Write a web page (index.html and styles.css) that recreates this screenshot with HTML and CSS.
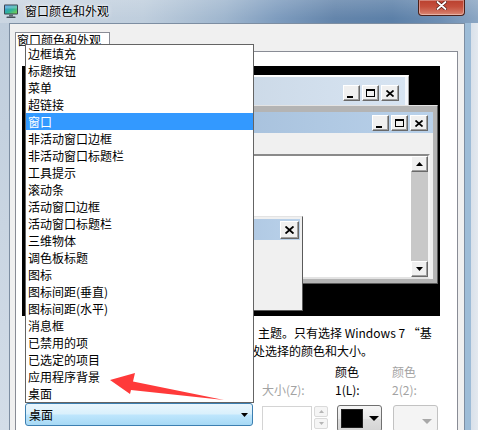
FILE: index.html
```html
<!DOCTYPE html>
<html lang="zh-CN">
<head>
<meta charset="utf-8">
<title>窗口颜色和外观</title>
<link rel="stylesheet" href="styles.css">
</head>
<body>
<div class="win">
  <div class="titlebar">
    <svg class="app-icon" width="16" height="16" viewBox="0 0 16 16">
      <defs>
        <linearGradient id="scr" x1="0" y1="0" x2="1" y2="1">
          <stop offset="0" stop-color="#3a8ee6"/>
          <stop offset="0.55" stop-color="#2fb39a"/>
          <stop offset="1" stop-color="#7ed04b"/>
        </linearGradient>
      </defs>
      <rect x="1" y="1.5" width="14" height="10" rx="1" fill="#39434e"/>
      <rect x="2" y="2.5" width="12" height="8" fill="url(#scr)"/>
      <rect x="2" y="2.5" width="12" height="3" fill="#fff" opacity="0.25"/>
      <rect x="6" y="11.5" width="4" height="2" fill="#5d6873"/>
      <rect x="3.5" y="13.5" width="9" height="1.5" rx="0.5" fill="#46505b"/>
    </svg>
    <span class="title">窗口颜色和外观</span>
    <div class="close">
      <svg width="11" height="9" viewBox="0 0 11 9">
        <path d="M1.5 1 L9.5 8 M9.5 1 L1.5 8" stroke="#5b1f16" stroke-width="3.4" stroke-linecap="round"/>
        <path d="M1.5 1 L9.5 8 M9.5 1 L1.5 8" stroke="#fff" stroke-width="1.8" stroke-linecap="round"/>
      </svg>
    </div>
  </div>

  <div class="frame">
    <div class="side side-left"></div>
    <div class="client">
      <div class="tabs"><div class="tab">窗口颜色和外观</div></div>
      <div class="page">
        <div class="preview">
          <div class="pw pw-inactive">
            <div class="cap cap-inactive">
              <span class="cb"><i class="g-min"></i></span>
              <span class="cb"><i class="g-max"></i></span>
              <span class="cb cb-x"><svg width="8" height="7" viewBox="0 0 8 7"><path d="M0.5 0.5 L7.5 6.5 M7.5 0.5 L0.5 6.5" stroke="#000" stroke-width="1.7"/></svg></span>
            </div>
          </div>
          <div class="pw pw-active">
            <div class="cap cap-active">
              <span class="cb"><i class="g-min"></i></span>
              <span class="cb"><i class="g-max"></i></span>
              <span class="cb cb-x"><svg width="8" height="7" viewBox="0 0 8 7"><path d="M0.5 0.5 L7.5 6.5 M7.5 0.5 L0.5 6.5" stroke="#000" stroke-width="1.7"/></svg></span>
            </div>
            <div class="pw-body">
              <div class="menubar"></div>
              <div class="textbox">
                <div class="scroll">
                  <span class="sb"><svg width="7" height="4" viewBox="0 0 7 4"><path d="M0 4 L3.5 0 L7 4 Z" fill="#000"/></svg></span>
                  <span class="sb"><svg width="7" height="4" viewBox="0 0 7 4"><path d="M0 0 L7 0 L3.5 4 Z" fill="#000"/></svg></span>
                </div>
              </div>
            </div>
          </div>
          <div class="pw pw-msg">
            <div class="cap cap-msg">
              <span class="cb cb-x cb-big"><svg width="9" height="8" viewBox="0 0 9 8"><path d="M0.5 0.5 L8.5 7.5 M8.5 0.5 L0.5 7.5" stroke="#000" stroke-width="1.9"/></svg></span>
            </div>
            <div class="msg-body"></div>
          </div>
        </div>

        <p class="desc">，主题。只有选择 Windows 7 “基<br>此处选择的颜色和大小。</p>

        <div class="controls">
          <div class="col col-item">
            <div class="lbl"></div>
            <div class="combo">
              <span>桌面</span>
              <svg width="7" height="4" viewBox="0 0 7 4"><path d="M0 0 L7 0 L3.5 4 Z" fill="#000"/></svg>
            </div>
          </div>
          <div class="col col-size">
            <div class="lbl dis"><span>大小(Z):</span></div>
            <div class="spin-row">
              <div class="num"></div>
              <div class="spin">
                <span class="sp"><svg width="5" height="3" viewBox="0 0 5 3"><path d="M0 3 L2.5 0 L5 3 Z" fill="#b5b5b5"/></svg></span>
                <span class="sp"><svg width="5" height="3" viewBox="0 0 5 3"><path d="M0 0 L5 0 L2.5 3 Z" fill="#b5b5b5"/></svg></span>
              </div>
            </div>
          </div>
          <div class="col col-c1">
            <div class="lbl"><span>颜色</span><span>1(L):</span></div>
            <div class="cbtn">
              <span class="swatch"></span>
              <svg width="10" height="5" viewBox="0 0 10 5"><path d="M0 0 L10 0 L5 5 Z" fill="#000"/></svg>
            </div>
          </div>
          <div class="col col-c2">
            <div class="lbl dis"><span>颜色</span><span>2(2):</span></div>
            <div class="cbtn cbtn-dis">
              <svg width="10" height="5" viewBox="0 0 10 5"><path d="M0 0 L10 0 L5 5 Z" fill="#a8a8a8"/></svg>
            </div>
          </div>
        </div>
      </div>
    </div>
    <div class="side side-right"></div>
  </div>

  <ul class="droplist">
    <li>边框填充</li>
    <li>标题按钮</li>
    <li>菜单</li>
    <li>超链接</li>
    <li class="sel">窗口</li>
    <li>非活动窗口边框</li>
    <li>非活动窗口标题栏</li>
    <li>工具提示</li>
    <li>滚动条</li>
    <li>活动窗口边框</li>
    <li>活动窗口标题栏</li>
    <li>三维物体</li>
    <li>调色板标题</li>
    <li>图标</li>
    <li>图标间距(垂直)</li>
    <li>图标间距(水平)</li>
    <li>消息框</li>
    <li>已禁用的项</li>
    <li>已选定的项目</li>
    <li>应用程序背景</li>
    <li>桌面</li>
  </ul>

  <svg class="mark" width="478" height="430" viewBox="0 0 478 430">
    <polygon points="110,380 135,373 133,381.5 224,400 131,390 130,394" fill="#ff3a3a"/>
  </svg>
</div>
</body>
</html>
```

FILE: styles.css
```css
* { box-sizing: border-box; }
html, body { margin: 0; padding: 0; }
body {
  width: 478px;
  height: 430px;
  overflow: hidden;
  font-family: "Noto Sans CJK SC", "Noto Sans", sans-serif;
  font-size: 12px;
  color: #000;
  background-color: #c9d5e2;
}
.win {
  position: relative;
  width: 478px;
  height: 430px;
  display: flex;
  flex-direction: column;
  background-color: #c9d5e2;
}

/* title bar (Aero glass) */
.titlebar {
  height: 23px;
  display: flex;
  align-items: flex-start;
  flex: none;
  background-color: #a9bdd2;
  background-image:
    linear-gradient(to bottom, rgba(255,255,255,0.16) 0%, rgba(255,255,255,0) 80%),
    linear-gradient(to right, #cbd6e2 0%, #bfcedd 30%, #9fb6ce 47%, #7e9cbe 58%, #6485ab 70%, #5c80a8 82%, #6d8eb3 92%, #8ba6c3 100%);
}
.app-icon { margin: 3px 0 0 3px; flex: none; }
.title {
  margin-left: 6px;
  line-height: 22px;
  font-size: 12px;
  text-shadow: 0 0 5px rgba(255,255,255,0.95), 0 0 2px rgba(255,255,255,0.9);
}
.close {
  margin-left: auto;
  margin-right: 13px;
  width: 47px;
  height: 16px;
  border: 1px solid #4c2019;
  border-top: none;
  border-radius: 0 0 4px 4px;
  background: linear-gradient(to bottom, #b9402f 0%, #c54f3c 45%, #d0705d 80%, #dc8c78 100%);
  box-shadow: inset 0 0 0 1px rgba(255,255,255,0.35);
  display: flex;
  justify-content: center;
  align-items: flex-start;
  padding-top: 1px;
}

/* frame */
.frame { flex: 1; display: flex; min-height: 0; }
.side { flex: none; }
.side-left {
  width: 9px;
  background: linear-gradient(to bottom, #bfcddc, #d3dde8);
}
.side-right {
  width: 13px;
  background: linear-gradient(to right, #9dbcd7 0, #9dbcd7 6px, #d9e1ea 6px, #e3e9ef 100%);
}
.client {
  width: 456px;
  flex: none;
  background: #f0f0f0;
  border: 1px solid #7d8ea2;
  border-bottom: none;
  display: flex;
  flex-direction: column;
}

/* tabs */
.tabs { padding: 8px 0 0 5px; display: flex; flex: none; }
.tab {
  position: relative;
  z-index: 1;
  width: 95px;
  height: 20px;
  margin-bottom: -1px;
  border: 1px solid #898c95;
  border-bottom: none;
  background: #fff;
  padding-left: 1px;
  line-height: 13px;
  white-space: nowrap;
}
.page {
  flex: 1;
  margin: 0 6px 0 5px;
  border: 1px solid #898c95;
  border-bottom: none;
  background: #fff;
  overflow: hidden;
}

/* preview */
.preview {
  position: relative;
  margin: 14px 0 0 6px;
  width: 418px;
  height: 250px;
  background: #000;
  overflow: hidden;
}
.pw { position: absolute; display: flex; flex-direction: column; }
.cap { display: flex; justify-content: flex-end; align-items: flex-start; flex: none; }
.cb {
  width: 17px;
  height: 16px;
  background: #f0f0f0;
  border: 1px solid;
  border-color: #fff #696969 #696969 #fff;
  box-shadow: inset -1px -1px 0 #a0a0a0;
  display: flex;
  justify-content: center;
  align-items: center;
}
.cb + .cb { margin-left: 2px; }
.cb-x { width: 18px; margin-left: 3px; }
.cb-big { width: 19px; height: 18px; }
.g-min { display: block; width: 6px; height: 2px; background: #000; margin: 7px 3px 0 0; }
.g-max { display: block; width: 9px; height: 8px; border: 1px solid #000; border-top-width: 2px; }

.pw-inactive {
  left: 30px;
  top: 9px;
  width: 357px;
  height: 100px;
  background: #f4f7fc;
  border-top: 2px solid #fff;
  border-right: 1px solid #a8a8a8;
  padding: 0 3px;
}
.cap-inactive {
  height: 30px;
  padding: 8px 6px 0 0;
  background: linear-gradient(to right, #bfcddb, #d7e4f2);
}

.pw-active {
  left: 40px;
  top: 39px;
  width: 376px;
  height: 179px;
  background: #b4b4b4;
  border: 1px solid;
  border-color: #e3e3e3 #5a5a5a #5a5a5a #e3e3e3;
  padding: 6px 4px 4px 4px;
}
.cap-active {
  height: 21px;
  padding: 3px 5px 0 0;
  background: linear-gradient(to right, #99b4d1, #b9d1ea);
}
.pw-body { flex: 1; background: #f0f0f0; display: flex; flex-direction: column; }
.menubar { height: 20px; flex: none; }
.textbox {
  flex: 1;
  margin: 1px 3px 0 4px;
  background: #fff;
  border: 2px solid;
  border-color: #8a8a8a #f4f4f4 #e3e3e3 #8a8a8a;
  display: flex;
  justify-content: flex-end;
}
.scroll {
  width: 17px;
  background: #c8c8c8;
  display: flex;
  flex-direction: column;
  justify-content: space-between;
}
.sb {
  height: 16px;
  background: #f0f0f0;
  border: 1px solid;
  border-color: #fff #696969 #696969 #fff;
  box-shadow: inset -1px -1px 0 #a0a0a0;
  display: flex;
  justify-content: center;
  align-items: center;
}

.pw-msg {
  left: 90px;
  top: 150px;
  width: 191px;
  height: 95px;
  background: #f0f0f0;
  border: 1px solid;
  border-color: #e3e3e3 #5a5a5a #5a5a5a #e3e3e3;
  padding: 2px;
}
.cap-msg {
  height: 21px;
  padding: 2px 1px 0 0;
  background: linear-gradient(to right, #99b4d1, #b9d1ea);
}
.msg-body { flex: 1; background: #f0f0f0; }

/* description */
.desc {
  margin: 8px 0 0 225px;
  line-height: 18px;
  text-indent: 5px;
  white-space: nowrap;
}

/* bottom controls */
.controls { display: flex; margin: 3px 0 0 9px; }
.col { flex: none; display: flex; flex-direction: column; }
.lbl {
  height: 36px;
  line-height: 18px;
  display: flex;
  flex-direction: column;
  justify-content: flex-end;
  white-space: nowrap;
}
.lbl.dis { color: #a3a3a3; }
.col-item { width: 228px; }
.col-size { width: 68px; margin-left: 9px; }
.col-c1 { width: 47px; margin-left: 5px; }
.col-c2 { width: 47px; margin-left: 10px; }

.combo {
  margin-top: 4px;
  height: 23px;
  border: 1px solid #3c7fb1;
  border-radius: 3px;
  background: linear-gradient(to bottom, #eaf6fd 0%, #d9f0fc 48%, #bee6fd 52%, #a7d9f5 100%);
  display: flex;
  align-items: center;
  justify-content: space-between;
  padding: 0 4px 0 3px;
}

.spin-row { margin-top: 7px; display: flex; gap: 2px; }
.num { width: 50px; height: 26px; border: 1px solid #d4d4d4; background: #fff; }
.spin { width: 14px; display: flex; flex-direction: column; gap: 1px; }
.sp {
  height: 11px;
  border: 1px solid #dadada;
  border-radius: 2px;
  background: #f5f5f5;
  display: flex;
  justify-content: center;
  align-items: center;
}

.cbtn {
  margin: 6px 0 0 2px;
  width: 45px;
  height: 27px;
  border: 1px solid #707070;
  border-radius: 3px;
  background: linear-gradient(to bottom, #f6f6f6, #e8e8e8 50%, #dedede 51%, #d4d4d4);
  display: flex;
  align-items: flex-start;
  padding: 3px 0 0 3px;
  gap: 6px;
}
.cbtn svg { margin-top: 7px; }
.swatch { width: 22px; height: 19px; background: #000; border: 1px solid #202020; }
.cbtn-dis {
  margin-left: 1px;
  border-color: #c2c2c2;
  background: #f4f4f4;
  justify-content: flex-end;
  padding-right: 5px;
}
.cbtn-dis svg { margin-top: 10px; }

/* open drop-down list (overlay) */
.droplist {
  position: absolute;
  left: 25px;
  top: 44px;
  width: 229px;
  height: 359px;
  margin: 0;
  padding: 0;
  list-style: none;
  background: #fff;
  border: 1px solid #646464;
  z-index: 5;
}
.droplist li {
  height: 17px;
  line-height: 17px;
  padding-left: 2px;
  white-space: nowrap;
}
.droplist li.sel { background: #3399ff; color: #fff; }

/* annotation arrow */
.mark {
  position: absolute;
  left: 0;
  top: 0;
  z-index: 6;
  pointer-events: none;
}
```
